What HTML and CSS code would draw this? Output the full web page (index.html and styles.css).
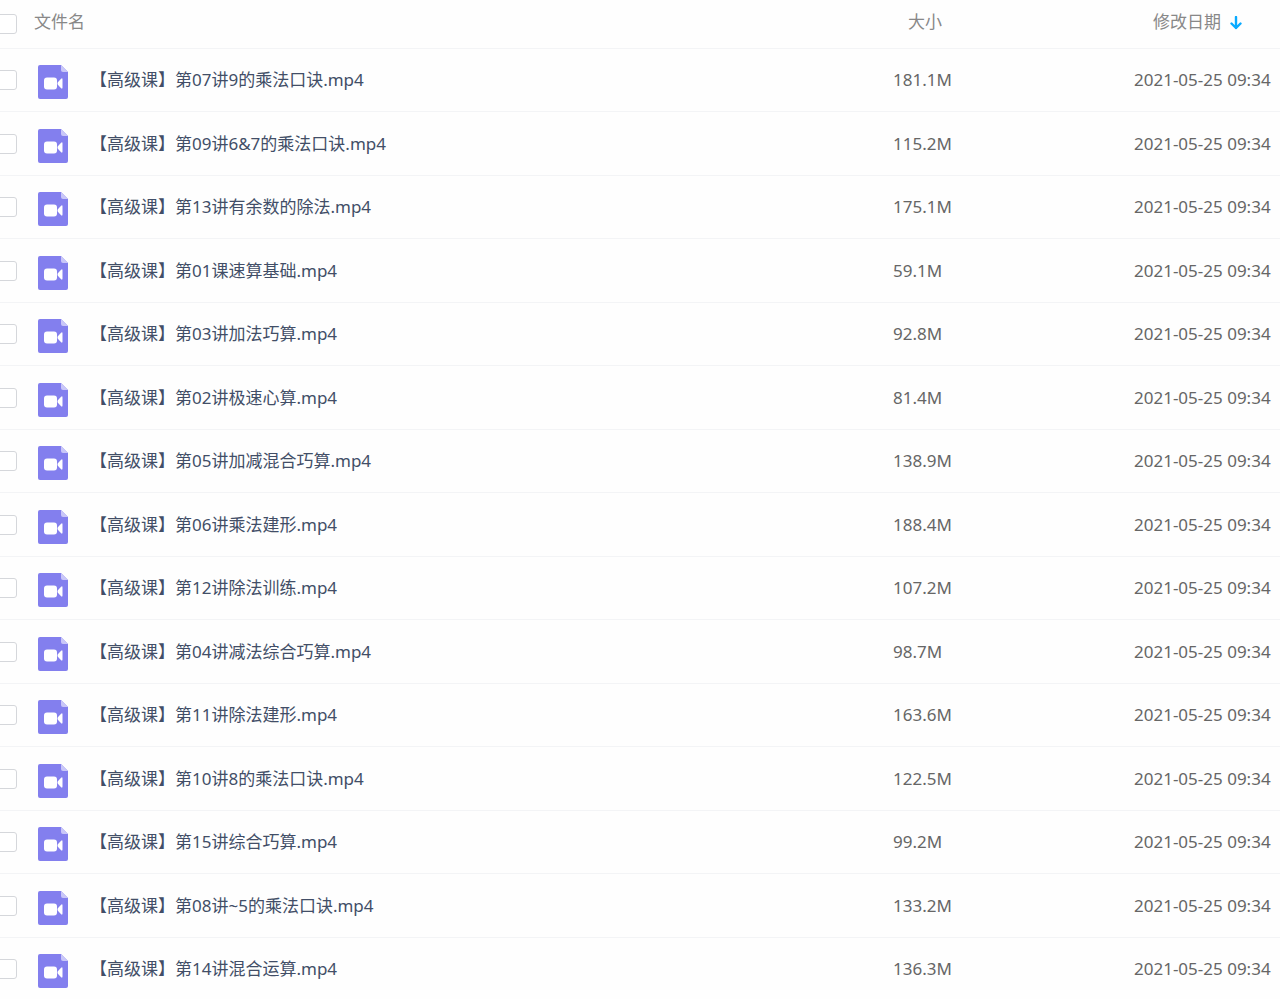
FILE: index.html
```html
<!DOCTYPE html>
<html lang="zh-CN">
<head>
  <meta charset="UTF-8" />
  <meta name="viewport" content="width=device-width, initial-scale=1.0"/>
  <title>文件列表</title>
  <link rel="stylesheet" href="styles.css">
</head>
<body>

  <!-- 视频文件图标 -->
  <svg class="sprite" aria-hidden="true">
    <symbol id="video-file" viewBox="0 0 32 36">
      <path fill="#837fee" d="M3 1h21l7 7v25a2 2 0 0 1-2 2H3a2 2 0 0 1-2-2V3a2 2 0 0 1 2-2z"/>
      <path fill="#c9c7f8" d="M24 1l7 7h-5a2 2 0 0 1-2-2z"/>
      <rect fill="#fff" x="7" y="13.500" width="13" height="12" rx="3"/>
      <path fill="#fff" d="M20.500 19.500q0-1 .8-1.700l2.800-3q1.400-1.100 1.400.6v8.200q0 1.700-1.400.6l-2.800-3q-.8-.7-.8-1.700z"/>
    </symbol>
  </svg>

  <table class="files">
    <colgroup>
      <col class="w-check">
      <col class="w-icon">
      <col>
      <col class="w-size">
      <col class="w-date">
    </colgroup>
    <thead>
      <tr>
        <th class="col-check"><input type="checkbox" aria-label="全选" /></th>
        <th colspan="2">文件名</th>
        <th class="col-size">大小</th>
        <th class="col-date">
          <button type="button" class="sort">修改日期
            <svg class="arrow" viewBox="0 0 12 14" aria-hidden="true"><path d="M6 1v11M1.500 7.500L6 12l4.500-4.500"/></svg>
          </button>
        </th>
      </tr>
    </thead>
    <tbody>
      <tr>
        <td class="col-check"><input type="checkbox" id="f1" /></td>
        <td class="col-icon"><svg class="icon"><use href="#video-file"/></svg></td>
        <td class="col-name"><label for="f1">【高级课】第07讲9的乘法口诀.mp4</label></td>
        <td class="col-size">181.1M</td>
        <td class="col-date">2021-05-25 09:34</td>
      </tr>
      <tr>
        <td class="col-check"><input type="checkbox" id="f2" /></td>
        <td class="col-icon"><svg class="icon"><use href="#video-file"/></svg></td>
        <td class="col-name"><label for="f2">【高级课】第09讲6&amp;7的乘法口诀.mp4</label></td>
        <td class="col-size">115.2M</td>
        <td class="col-date">2021-05-25 09:34</td>
      </tr>
      <tr>
        <td class="col-check"><input type="checkbox" id="f3" /></td>
        <td class="col-icon"><svg class="icon"><use href="#video-file"/></svg></td>
        <td class="col-name"><label for="f3">【高级课】第13讲有余数的除法.mp4</label></td>
        <td class="col-size">175.1M</td>
        <td class="col-date">2021-05-25 09:34</td>
      </tr>
      <tr>
        <td class="col-check"><input type="checkbox" id="f4" /></td>
        <td class="col-icon"><svg class="icon"><use href="#video-file"/></svg></td>
        <td class="col-name"><label for="f4">【高级课】第01课速算基础.mp4</label></td>
        <td class="col-size">59.1M</td>
        <td class="col-date">2021-05-25 09:34</td>
      </tr>
      <tr>
        <td class="col-check"><input type="checkbox" id="f5" /></td>
        <td class="col-icon"><svg class="icon"><use href="#video-file"/></svg></td>
        <td class="col-name"><label for="f5">【高级课】第03讲加法巧算.mp4</label></td>
        <td class="col-size">92.8M</td>
        <td class="col-date">2021-05-25 09:34</td>
      </tr>
      <tr>
        <td class="col-check"><input type="checkbox" id="f6" /></td>
        <td class="col-icon"><svg class="icon"><use href="#video-file"/></svg></td>
        <td class="col-name"><label for="f6">【高级课】第02讲极速心算.mp4</label></td>
        <td class="col-size">81.4M</td>
        <td class="col-date">2021-05-25 09:34</td>
      </tr>
      <tr>
        <td class="col-check"><input type="checkbox" id="f7" /></td>
        <td class="col-icon"><svg class="icon"><use href="#video-file"/></svg></td>
        <td class="col-name"><label for="f7">【高级课】第05讲加减混合巧算.mp4</label></td>
        <td class="col-size">138.9M</td>
        <td class="col-date">2021-05-25 09:34</td>
      </tr>
      <tr>
        <td class="col-check"><input type="checkbox" id="f8" /></td>
        <td class="col-icon"><svg class="icon"><use href="#video-file"/></svg></td>
        <td class="col-name"><label for="f8">【高级课】第06讲乘法建形.mp4</label></td>
        <td class="col-size">188.4M</td>
        <td class="col-date">2021-05-25 09:34</td>
      </tr>
      <tr>
        <td class="col-check"><input type="checkbox" id="f9" /></td>
        <td class="col-icon"><svg class="icon"><use href="#video-file"/></svg></td>
        <td class="col-name"><label for="f9">【高级课】第12讲除法训练.mp4</label></td>
        <td class="col-size">107.2M</td>
        <td class="col-date">2021-05-25 09:34</td>
      </tr>
      <tr>
        <td class="col-check"><input type="checkbox" id="f10" /></td>
        <td class="col-icon"><svg class="icon"><use href="#video-file"/></svg></td>
        <td class="col-name"><label for="f10">【高级课】第04讲减法综合巧算.mp4</label></td>
        <td class="col-size">98.7M</td>
        <td class="col-date">2021-05-25 09:34</td>
      </tr>
      <tr>
        <td class="col-check"><input type="checkbox" id="f11" /></td>
        <td class="col-icon"><svg class="icon"><use href="#video-file"/></svg></td>
        <td class="col-name"><label for="f11">【高级课】第11讲除法建形.mp4</label></td>
        <td class="col-size">163.6M</td>
        <td class="col-date">2021-05-25 09:34</td>
      </tr>
      <tr>
        <td class="col-check"><input type="checkbox" id="f12" /></td>
        <td class="col-icon"><svg class="icon"><use href="#video-file"/></svg></td>
        <td class="col-name"><label for="f12">【高级课】第10讲8的乘法口诀.mp4</label></td>
        <td class="col-size">122.5M</td>
        <td class="col-date">2021-05-25 09:34</td>
      </tr>
      <tr>
        <td class="col-check"><input type="checkbox" id="f13" /></td>
        <td class="col-icon"><svg class="icon"><use href="#video-file"/></svg></td>
        <td class="col-name"><label for="f13">【高级课】第15讲综合巧算.mp4</label></td>
        <td class="col-size">99.2M</td>
        <td class="col-date">2021-05-25 09:34</td>
      </tr>
      <tr>
        <td class="col-check"><input type="checkbox" id="f14" /></td>
        <td class="col-icon"><svg class="icon"><use href="#video-file"/></svg></td>
        <td class="col-name"><label for="f14">【高级课】第08讲~5的乘法口诀.mp4</label></td>
        <td class="col-size">133.2M</td>
        <td class="col-date">2021-05-25 09:34</td>
      </tr>
      <tr>
        <td class="col-check"><input type="checkbox" id="f15" /></td>
        <td class="col-icon"><svg class="icon"><use href="#video-file"/></svg></td>
        <td class="col-name"><label for="f15">【高级课】第14讲混合运算.mp4</label></td>
        <td class="col-size">136.3M</td>
        <td class="col-date">2021-05-25 09:34</td>
      </tr>
    </tbody>
  </table>

</body>
</html>
```
FILE: styles.css
```css
body {
  margin: 0;
  background: #fefefe;
  color: #666;
  font-family: 'Noto Sans', 'Noto Sans CJK SC', sans-serif;
  font-size: 17px;
  line-height: 24px;
}

.sprite {
  display: none;
}

.files {
  width: 100%;
  border-collapse: separate;
  border-spacing: 0;
  table-layout: fixed;
}

.w-check {
  width: 34px;
}

.w-icon {
  width: 56px;
}

.w-size {
  width: 241px;
}

.w-date {
  width: 146px;
}

th, td {
  box-sizing: border-box;
  padding: 0;
  border-bottom: 1px solid #f3f4f6;
  text-align: left;
  vertical-align: middle;
  white-space: nowrap;
}

th {
  height: 49px;
  padding-bottom: 4px;
  color: #888;
  font-weight: normal;
}

th.col-check {
  padding-bottom: 0;
}

th.col-size {
  padding-left: 15px;
}

th.col-date {
  padding-left: 19px;
}

td {
  height: 63px;
}

tr:nth-child(even) td {
  height: 64px;
}

.col-name {
  color: #424e67;
}

input[type="checkbox"] {
  appearance: none;
  display: block;
  box-sizing: border-box;
  width: 20px;
  height: 20px;
  margin: 0 0 0 -3px;
  border: 1px solid #d5d7db;
  border-radius: 3px;
  background: #fff;
}

input[type="checkbox"]:checked {
  background: #09aaff;
}

.icon {
  display: block;
  width: 32px;
  height: 36px;
  margin: 4px 0 0 3px;
}

.sort {
  display: flex;
  align-items: center;
  gap: 9px;
  padding: 0;
  border: none;
  background: none;
  color: inherit;
  font: inherit;
  cursor: pointer;
}

.arrow {
  width: 12px;
  height: 14px;
  margin-top: 2px;
  fill: none;
  stroke: #09aaff;
  stroke-width: 2.4;
  stroke-linecap: round;
  stroke-linejoin: round;
}
```
